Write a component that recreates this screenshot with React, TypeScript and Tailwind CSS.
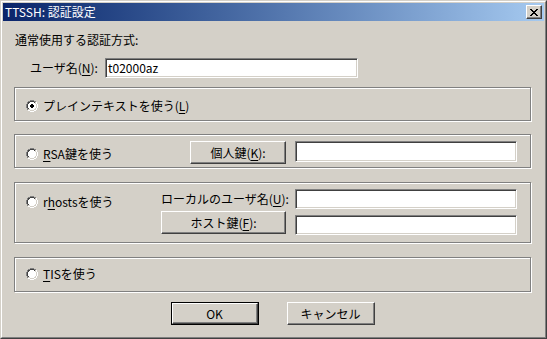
import React from "react";

const RADIO = [
  "....oooo....",
  "..ooiiiioo..",
  ".oiiwwwwiio.",
  ".oiwwwwwwio.",
  "oiwwwwwwwwio",
  "oiwwwwwwwwio",
  "oiwwwwwwwwio",
  "oiwwwwwwwwio",
  ".oiwwwwwwio.",
  ".oiiwwwwiio.",
  "..ooiiiioo..",
  "....oooo....",
];
const DOT = [
  "............",
  "............",
  "............",
  "............",
  ".....xx.....",
  "....xxxx....",
  "....xxxx....",
  ".....xx.....",
  "............",
  "............",
  "............",
  "............",
];

function Radio({ checked }: { checked?: boolean }) {
  const rects: React.ReactElement[] = [];
  RADIO.forEach((row, r) => {
    row.split("").forEach((ch, c) => {
      let fill = "";
      const tl = r + c <= 10;
      if (ch === "o") fill = tl ? "#808080" : "#ffffff";
      else if (ch === "i") fill = tl ? "#404040" : "#d4d0c8";
      else if (ch === "w") fill = "#ffffff";
      if (checked && DOT[r][c] === "x") fill = "#000000";
      if (fill) rects.push(<rect key={`${r}-${c}`} x={c} y={r} width={1} height={1} fill={fill} />);
    });
  });
  return (
    <svg width="12" height="12" viewBox="0 0 12 12" shapeRendering="crispEdges" className="shrink-0">
      {rects}
    </svg>
  );
}

const XMAP = [
  "xx....xx",
  ".xx..xx.",
  "..xxxx..",
  "...xx...",
  "..xxxx..",
  ".xx..xx.",
  "xx....xx",
];

function CloseGlyph() {
  const rects: React.ReactElement[] = [];
  XMAP.forEach((row, r) =>
    row.split("").forEach((ch, c) => {
      if (ch === "x") rects.push(<rect key={`${r}-${c}`} x={c} y={r} width={1} height={1} fill="#000" />);
    })
  );
  return (
    <svg width="8" height="7" viewBox="0 0 8 7" shapeRendering="crispEdges">
      {rects}
    </svg>
  );
}

function Btn({ children, className = "" }: { children: React.ReactNode; className?: string }) {
  return (
    <div
      className={`flex items-center justify-center border border-t-white border-l-white border-b-[#404040] border-r-[#404040] bg-[#d4d0c8] shadow-[inset_-1px_-1px_0_#808080] text-black ${className}`}
    >
      {children}
    </div>
  );
}

function Edit({ className = "", value = "" }: { className?: string; value?: string }) {
  return (
    <div
      className={`flex items-center border border-t-[#808080] border-l-[#808080] border-b-white border-r-white bg-white shadow-[inset_1px_1px_0_#404040,inset_-1px_-1px_0_#d4d0c8] pl-[2px] text-black ${className}`}
    >
      {value}
    </div>
  );
}

function RadioRow({ checked, children, className = "" }: { checked?: boolean; children: React.ReactNode; className?: string }) {
  return (
    <div className={`flex items-center h-[14px] gap-[5px] ${className}`}>
      <Radio checked={checked} />
      <span className="leading-[14px] whitespace-nowrap">{children}</span>
    </div>
  );
}

function Group({ className = "", children }: { className?: string; children: React.ReactNode }) {
  return (
    <div className={`w-[517px] border border-[#808080] shadow-[inset_1px_1px_0_#fff,1px_1px_0_#fff] ${className}`}>
      {children}
    </div>
  );
}

const U = ({ children }: { children: React.ReactNode }) => (
  <span className="underline underline-offset-[2px] decoration-1">{children}</span>
);

export default function App() {
  return (
    <div className="w-[547px] h-[339px] bg-[#d4d0c8] border border-t-[#d4d0c8] border-l-[#d4d0c8] border-b-[#404040] border-r-[#404040] font-[family-name:'Noto_Sans_CJK_JP',sans-serif] text-[12px] leading-[14px] text-black">
      <div className="h-full border border-t-white border-l-white border-b-[#808080] border-r-[#808080] p-px flex flex-col">
        {/* Title bar */}
        <div className="h-[18px] shrink-0 flex items-center justify-between bg-linear-to-r from-[#0a246a] to-[#a6caf0] pl-[2px] pr-[2px]">
          <span className="text-white leading-[14px]">TTSSH: 認証設定</span>
          <Btn className="w-[16px] h-[14px]">
            <CloseGlyph />
          </Btn>
        </div>

        {/* Body */}
        <div className="flex flex-col pl-[11px] pr-[13px]">
          <div className="mt-[12px] ml-[1px] h-[14px]">通常使用する認証方式:</div>

          <div className="mt-[11px] flex items-center">
            <div className="ml-[16px] w-[75px] whitespace-nowrap">
              ユーザ名(<U>N</U>):
            </div>
            <Edit className="w-[253px] h-[20px]" value="t02000az" />
          </div>

          <Group className="mt-[9px] h-[34px]">
            <RadioRow checked className="mt-[11px] ml-[11px]">
              プレインテキストを使う(<U>L</U>)
            </RadioRow>
          </Group>

          <Group className="mt-[13px] h-[34px] flex items-start">
            <div className="w-[175px] pl-[11px] pt-[12px]">
              <RadioRow>
                <U>R</U>SA鍵を使う
              </RadioRow>
            </div>
            <Btn className="mt-[6px] w-[96px] h-[23px]">
              個人鍵(<U>K</U>):
            </Btn>
            <Edit className="mt-[6px] ml-[9px] w-[222px] h-[21px]" />
          </Group>

          <Group className="mt-[14px] h-[61px] flex items-start">
            <div className="w-[146px] pl-[11px] pt-[12px]">
              <RadioRow>
                r<U>h</U>ostsを使う
              </RadioRow>
            </div>
            <div className="mt-[6px] flex flex-col">
              <div className="flex items-center h-[20px]">
                <div className="w-[125px] text-right whitespace-nowrap">
                  ローカルのユーザ名(<U>U</U>):
                </div>
                <Edit className="ml-[9px] w-[222px] h-[20px]" />
              </div>
              <div className="mt-[2px] flex items-start">
                <Btn className="w-[125px] h-[23px]">
                  ホスト鍵(<U>F</U>):
                </Btn>
                <Edit className="mt-[4px] ml-[9px] w-[222px] h-[20px]" />
              </div>
            </div>
          </Group>

          <Group className="mt-[14px] h-[35px]">
            <RadioRow className="mt-[9px] ml-[11px]">
              <U>T</U>ISを使う
            </RadioRow>
          </Group>

          <div className="mt-[10px] flex justify-center gap-[28px]">
            <div className="border border-black">
              <Btn className="w-[86px] h-[21px]">OK</Btn>
            </div>
            <Btn className="w-[88px] h-[23px]">キャンセル</Btn>
          </div>
        </div>
      </div>
    </div>
  );
}
